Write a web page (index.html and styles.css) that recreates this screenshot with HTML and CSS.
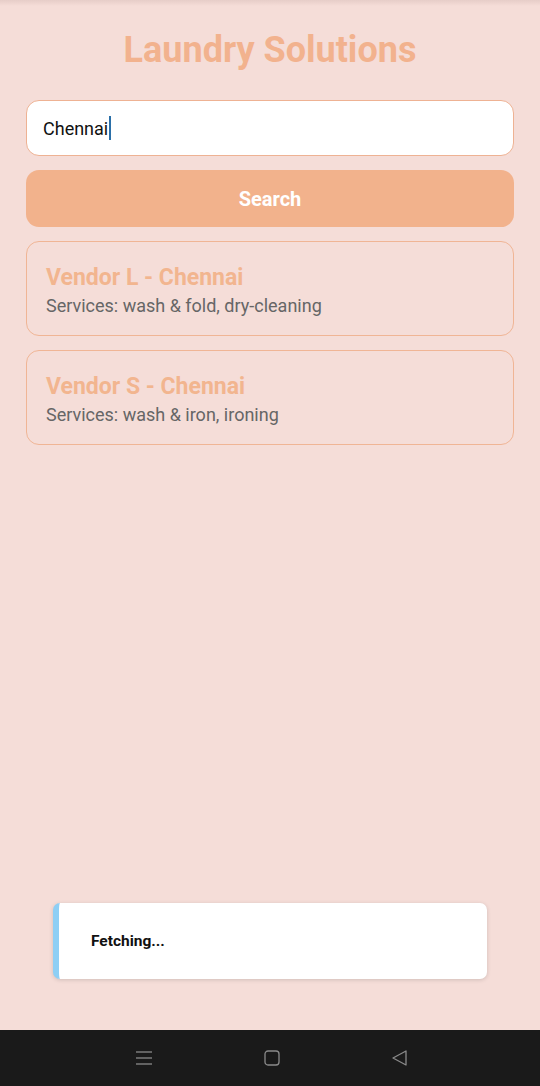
FILE: index.html
```html
<!DOCTYPE html>
<html>
<head>
<meta charset="utf-8">
<link rel="stylesheet" href="styles.css">
</head>
<body>
<div class="screen">
  <main class="app">
    <h1 class="title">Laundry Solutions</h1>
    <div class="input-box"><span class="input-text">Chennai</span><span class="caret"></span></div>
    <button class="search-btn">Search</button>
    <div class="card">
      <div class="card-title">Vendor L - Chennai</div>
      <div class="card-sub">Services: wash &amp; fold, dry-cleaning</div>
    </div>
    <div class="card">
      <div class="card-title">Vendor S - Chennai</div>
      <div class="card-sub">Services: wash &amp; iron, ironing</div>
    </div>
    <div class="spacer"></div>
    <div class="toast"><span class="toast-text">Fetching...</span></div>
  </main>
  <nav class="navbar">
    <svg width="18" height="16" viewBox="0 0 18 16"><g stroke="#8a8a8a" stroke-width="1.3" fill="none"><line x1="1" y1="2" x2="17" y2="2"/><line x1="1" y1="8" x2="17" y2="8"/><line x1="1" y1="14" x2="17" y2="14"/></g></svg>
    <svg width="18" height="18" viewBox="0 0 18 18"><rect x="2" y="2" width="14" height="14" rx="3" stroke="#8a8a8a" stroke-width="1.3" fill="none"/></svg>
    <svg width="18" height="18" viewBox="0 0 18 18"><path d="M15 2 L2 9 L15 16 Z" stroke="#8a8a8a" stroke-width="1.3" fill="none" stroke-linejoin="round"/></svg>
  </nav>
</div>
</body>
</html>
```
FILE: styles.css
```css
html, body {
  margin: 0;
  padding: 0;
}
body {
  font-family: Roboto, "Liberation Sans", sans-serif;
  background: #f5ddd8;
}
.screen {
  width: 540px;
  height: 1086px;
  display: flex;
  flex-direction: column;
}
.app {
  flex: 1;
  display: flex;
  flex-direction: column;
  padding: 0 26px;
  background: linear-gradient(#e6cdc8, #f5ddd8 6px);
}
.title {
  margin: 30px 0 30px;
  text-align: center;
  font-size: 36px;
  font-weight: 700;
  color: #f2b28e;
  line-height: 40px;
}
.input-box {
  height: 54px;
  background: #fff;
  border: 1px solid #eeb293;
  border-radius: 13px;
  display: flex;
  align-items: center;
  padding-left: 16px;
}
.input-text {
  font-size: 18px;
  color: #111;
}
.caret {
  width: 2px;
  height: 24px;
  background: #2a6fa8;
  margin-left: 1px;
}
.search-btn {
  margin-top: 14px;
  height: 57px;
  border: none;
  border-radius: 13px;
  background: #f2b28c;
  color: #fff;
  font-family: Roboto, "Liberation Sans", sans-serif;
  font-size: 20px;
  font-weight: 700;
  padding: 0;
}
.card {
  margin-top: 14px;
  border: 1px solid #f0b595;
  border-radius: 13px;
  box-sizing: border-box;
  height: 95px;
  padding: 21px 19px 0;
}
.card-title {
  font-size: 23px;
  font-weight: 700;
  color: #f2b58f;
  line-height: 30px;
}
.card-sub {
  margin-top: 2px;
  font-size: 18px;
  color: #666;
  line-height: 22px;
}
.spacer {
  flex: 1;
}
.toast {
  margin: 0 27px 51px;
  height: 76px;
  background: #fff;
  border-radius: 7px;
  border-left: 6px solid #8ecff5;
  box-shadow: 0 1px 4px rgba(0,0,0,0.15);
  display: flex;
  align-items: center;
  padding-left: 32px;
}
.toast-text {
  font-size: 15.5px;
  font-weight: 700;
  color: #111;
}
.navbar {
  height: 56px;
  background: #1a1a1a;
  display: flex;
  justify-content: center;
  align-items: center;
  gap: 110px;
  padding-left: 4px;
}
```
